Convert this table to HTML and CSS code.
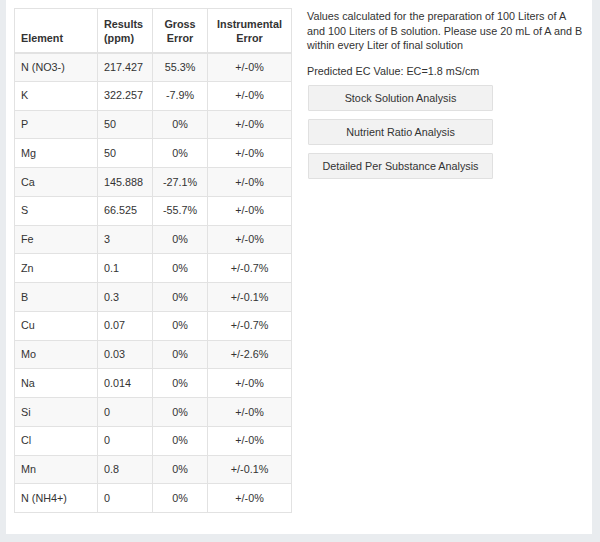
FILE: index.html
```html
<!DOCTYPE html>
<html>
<head>
<meta charset="utf-8">
<link rel="stylesheet" href="styles.css">
</head>
<body>
<div class="panel">
  <table class="results">
    <colgroup>
      <col class="c1"><col class="c2"><col class="c3"><col class="c4">
    </colgroup>
    <thead>
      <tr>
        <th>Element</th>
        <th>Results<br>(ppm)</th>
        <th class="ctr">Gross<br>Error</th>
        <th class="ctr">Instrumental<br>Error</th>
      </tr>
    </thead>
    <tbody>
      <tr><td>N (NO3-)</td><td>217.427</td><td class="ctr">55.3%</td><td class="ctr">+/-0%</td></tr>
      <tr><td>K</td><td>322.257</td><td class="ctr">-7.9%</td><td class="ctr">+/-0%</td></tr>
      <tr><td>P</td><td>50</td><td class="ctr">0%</td><td class="ctr">+/-0%</td></tr>
      <tr><td>Mg</td><td>50</td><td class="ctr">0%</td><td class="ctr">+/-0%</td></tr>
      <tr><td>Ca</td><td>145.888</td><td class="ctr">-27.1%</td><td class="ctr">+/-0%</td></tr>
      <tr><td>S</td><td>66.525</td><td class="ctr">-55.7%</td><td class="ctr">+/-0%</td></tr>
      <tr><td>Fe</td><td>3</td><td class="ctr">0%</td><td class="ctr">+/-0%</td></tr>
      <tr><td>Zn</td><td>0.1</td><td class="ctr">0%</td><td class="ctr">+/-0.7%</td></tr>
      <tr><td>B</td><td>0.3</td><td class="ctr">0%</td><td class="ctr">+/-0.1%</td></tr>
      <tr><td>Cu</td><td>0.07</td><td class="ctr">0%</td><td class="ctr">+/-0.7%</td></tr>
      <tr><td>Mo</td><td>0.03</td><td class="ctr">0%</td><td class="ctr">+/-2.6%</td></tr>
      <tr><td>Na</td><td>0.014</td><td class="ctr">0%</td><td class="ctr">+/-0%</td></tr>
      <tr><td>Si</td><td>0</td><td class="ctr">0%</td><td class="ctr">+/-0%</td></tr>
      <tr><td>Cl</td><td>0</td><td class="ctr">0%</td><td class="ctr">+/-0%</td></tr>
      <tr><td>Mn</td><td>0.8</td><td class="ctr">0%</td><td class="ctr">+/-0.1%</td></tr>
      <tr><td>N (NH4+)</td><td>0</td><td class="ctr">0%</td><td class="ctr">+/-0%</td></tr>
    </tbody>
  </table>
  <div class="side">
    <p class="note">Values calculated for the preparation of 100 Liters of A and 100 Liters of B solution. Please use 20 mL of A and B within every Liter of final solution</p>
    <p class="ec">Predicted EC Value: EC=1.8 mS/cm</p>
    <div class="buttons">
      <button class="btn">Stock Solution Analysis</button>
      <button class="btn">Nutrient Ratio Analysis</button>
      <button class="btn">Detailed Per Substance Analysis</button>
    </div>
  </div>
</div>
</body>
</html>
```

FILE: styles.css
```css
html, body {
  margin: 0;
  padding: 0;
}
body {
  background: #e9ecef;
  font-family: "Liberation Sans", Arial, sans-serif;
  font-size: 10.8px;
  line-height: 14.5px;
  color: #333;
  padding: 0 8px 8px 6px;
  height: 542px;
  box-sizing: border-box;
}
.panel {
  background: #fff;
  display: flex;
  align-items: flex-start;
  gap: 15px;
  padding: 8px 8px 22px 8px;
  height: 534px;
  box-sizing: border-box;
}
.results {
  border-collapse: collapse;
  table-layout: fixed;
  width: 277px;
  border: 1px solid #e2e2e2;
}
.c1 { width: 83px; }
.c2 { width: 55px; }
.c3 { width: 55px; }
.c4 { width: 84px; }
.results th, .results td {
  border: 1px solid #e2e2e2;
  padding: 0 6px;
  text-align: left;
  white-space: nowrap;
}
.results thead tr {
  height: 44px;
}
.results th {
  vertical-align: bottom;
  padding-bottom: 6px;
  font-weight: bold;
  border-bottom: 2px solid #e2e2e2;
}
.results tbody tr {
  height: 28.75px;
}
.results tbody tr:nth-child(odd) {
  background: #f8f8f8;
}
.results .ctr {
  text-align: center;
}
.side {
  width: 282px;
  padding-top: 1px;
}
.note {
  margin: 0;
}
.ec {
  margin: 11px 0 0;
}
.buttons {
  display: flex;
  flex-direction: column;
  gap: 8px;
  margin-top: 7px;
  margin-left: 1px;
}
.btn {
  width: 185px;
  height: 26px;
  background: #f2f2f2;
  border: 1px solid #e0e0e0;
  border-radius: 1px;
  font-family: inherit;
  font-size: 10.8px;
  color: #333;
  padding: 0;
}
```
